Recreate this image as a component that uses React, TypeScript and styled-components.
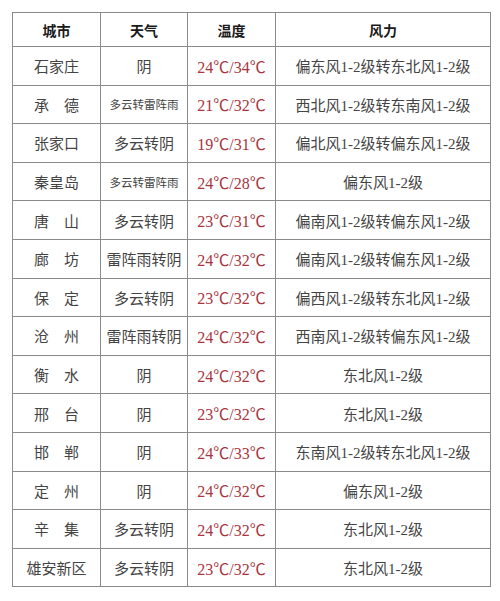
import styled, { createGlobalStyle } from 'styled-components';

type Row = {
  city: string;
  weather: string;
  small?: boolean;
  temp: string;
  wind: string;
};

const ROWS: Row[] = [
  { city: '石家庄', weather: '阴', temp: '24℃/34℃', wind: '偏东风1-2级转东北风1-2级' },
  { city: '承　德', weather: '多云转雷阵雨', small: true, temp: '21℃/32℃', wind: '西北风1-2级转东南风1-2级' },
  { city: '张家口', weather: '多云转阴', temp: '19℃/31℃', wind: '偏北风1-2级转偏东风1-2级' },
  { city: '秦皇岛', weather: '多云转雷阵雨', small: true, temp: '24℃/28℃', wind: '偏东风1-2级' },
  { city: '唐　山', weather: '多云转阴', temp: '23℃/31℃', wind: '偏南风1-2级转偏东风1-2级' },
  { city: '廊　坊', weather: '雷阵雨转阴', temp: '24℃/32℃', wind: '偏南风1-2级转偏东风1-2级' },
  { city: '保　定', weather: '多云转阴', temp: '23℃/32℃', wind: '偏西风1-2级转东北风1-2级' },
  { city: '沧　州', weather: '雷阵雨转阴', temp: '24℃/32℃', wind: '西南风1-2级转偏东风1-2级' },
  { city: '衡　水', weather: '阴', temp: '24℃/32℃', wind: '东北风1-2级' },
  { city: '邢　台', weather: '阴', temp: '23℃/32℃', wind: '东北风1-2级' },
  { city: '邯　郸', weather: '阴', temp: '24℃/33℃', wind: '东南风1-2级转东北风1-2级' },
  { city: '定　州', weather: '阴', temp: '24℃/32℃', wind: '偏东风1-2级' },
  { city: '辛　集', weather: '多云转阴', temp: '24℃/32℃', wind: '东北风1-2级' },
  { city: '雄安新区', weather: '多云转阴', temp: '23℃/32℃', wind: '东北风1-2级' },
];

const GlobalStyle = createGlobalStyle`
  html, body {
    margin: 0;
    padding: 0;
    background: #fff;
  }
`;

const Page = styled.div`
  width: 500px;
  height: 601px;
  padding: 12px 0 0 12px;
  box-sizing: border-box;
  font-family: 'Liberation Serif', 'Noto Sans CJK SC', serif;
`;

const Table = styled.table`
  width: 479px;
  border-collapse: collapse;
  border: 1.5px solid #8a8a8a;
  table-layout: fixed;
`;

const HeadCell = styled.th`
  height: 33px;
  padding: 0;
  border: 1px solid #8a8a8a;
  font-size: 14px;
  font-weight: 700;
  color: #1a1a1a;
  text-align: center;
  vertical-align: middle;
`;

const Cell = styled.td<{ $small?: boolean; $red?: boolean }>`
  height: 37.6px;
  padding: 0;
  border: 1px solid #8a8a8a;
  font-size: ${(p) => (p.$red ? '16px' : p.$small ? '11.5px' : '15px')};
  color: ${(p) => (p.$red ? '#a8343c' : '#444')};
  text-align: center;
  vertical-align: middle;
  white-space: nowrap;
`;

export default function App() {
  return (
    <>
      <GlobalStyle />
      <Page>
        <Table>
          <colgroup>
            <col style={{ width: 88 }} />
            <col style={{ width: 87 }} />
            <col style={{ width: 88 }} />
            <col />
          </colgroup>
          <thead>
            <tr>
              <HeadCell>城市</HeadCell>
              <HeadCell>天气</HeadCell>
              <HeadCell>温度</HeadCell>
              <HeadCell>风力</HeadCell>
            </tr>
          </thead>
          <tbody>
            {ROWS.map((r) => (
              <tr key={r.city}>
                <Cell>{r.city}</Cell>
                <Cell $small={r.small}>{r.weather}</Cell>
                <Cell $red>{r.temp}</Cell>
                <Cell>{r.wind}</Cell>
              </tr>
            ))}
          </tbody>
        </Table>
      </Page>
    </>
  );
}
